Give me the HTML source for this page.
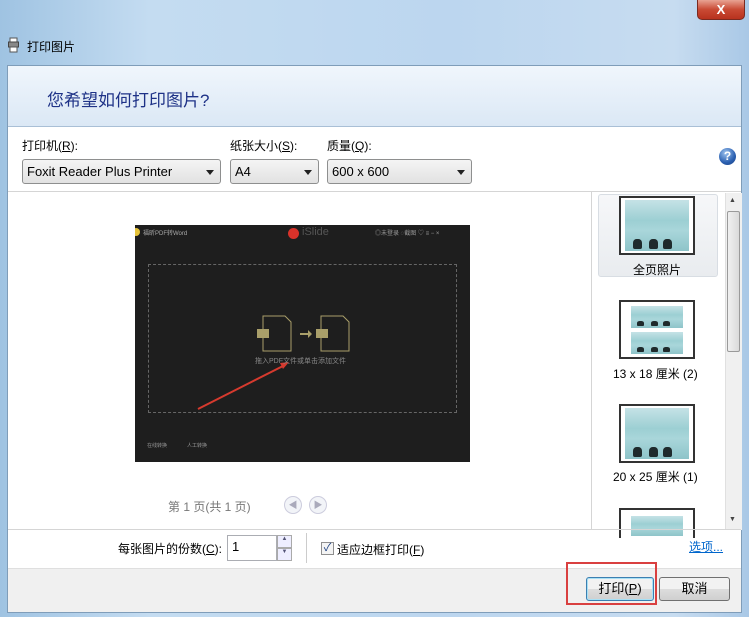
<!DOCTYPE html>
<html><head><meta charset="utf-8"><style>
*{box-sizing:border-box;margin:0;padding:0}
body{width:749px;height:617px;overflow:hidden;position:relative;font-family:"Liberation Sans","Noto Sans CJK SC",sans-serif;font-size:12px;color:#000;background:linear-gradient(90deg,#9fc3e2 0%,#c4dcf1 20%,#bcd6ef 60%,#c7dcf0 90%,#a9c8e6 100%)}
.abs{position:absolute}
.sel{position:absolute;height:25px;border:1px solid #8e8f8f;border-radius:3px;background:linear-gradient(#f4f4f4,#e2e2e2);font-size:13px;padding:4px 0 0 4px}
.sel:after{content:"";position:absolute;right:6px;top:10px;border:4px solid transparent;border-top:5px solid #222}
.btn{position:absolute;height:24px;border:1px solid #707070;border-radius:3px;background:linear-gradient(#f2f2f2 50%,#dddddd 50%,#cfcfcf);text-align:center;font-size:13px;line-height:22px}
.thumb{position:absolute;border:2px solid #333;background:#fff}
.ph{position:absolute;background:linear-gradient(#c5e2e6,#9ccfd3 40%,#a9d6da 60%,#8ec4c9);overflow:hidden}
.fig{position:absolute;bottom:2px;width:9px;height:10px;border-radius:40% 40% 20% 20%;background:#1f2a2c}
</style></head><body>
<div class="abs" style="left:697px;top:0;width:48px;height:20px;border:1px solid #7a2a20;border-top:0;border-radius:0 0 5px 5px;background:linear-gradient(#e8a393,#c94a34 50%,#b8321e);color:#fff;font-weight:bold;text-align:center;font-size:13px;line-height:19px">X</div>
<svg class="abs" style="left:8px;top:37px" width="12" height="16"><rect x="2" y="1" width="7" height="4" fill="#fff" stroke="#555"/><rect x="0.5" y="5" width="10" height="5" fill="#888" stroke="#444"/><rect x="2" y="10" width="7" height="5" fill="#fff" stroke="#555"/></svg>
<div class="abs" style="left:27px;top:38px;font-size:12px">打印图片</div>
<div class="abs" style="left:7px;top:65px;width:735px;height:548px;border:1px solid #7f9db9;background:#fff"></div>
<div class="abs" style="left:8px;top:66px;width:733px;height:61px;background:linear-gradient(#f0f6fc,#dbe8f5);border-bottom:1px solid #a9bfd6"></div>
<div class="abs" style="left:47px;top:86px;font-size:17px;color:#1e3287">您希望如何打印图片?</div>
<div class="abs" style="left:22px;top:137px">打印机(<u>R</u>):</div>
<div class="abs" style="left:230px;top:137px">纸张大小(<u>S</u>):</div>
<div class="abs" style="left:327px;top:137px">质量(<u>Q</u>):</div>
<div class="sel" style="left:22px;top:159px;width:199px">Foxit Reader Plus Printer</div>
<div class="sel" style="left:230px;top:159px;width:89px">A4</div>
<div class="sel" style="left:327px;top:159px;width:145px">600 x 600</div>
<div class="abs" style="left:719px;top:148px;width:17px;height:17px;border-radius:50%;background:radial-gradient(circle at 40% 30%,#9ec4f0,#2a5fb0 60%,#1b3f80);color:#fff;font-weight:bold;font-size:12px;text-align:center;line-height:17px">?</div>
<div class="abs" style="left:8px;top:191px;width:733px;height:1px;background:#d5d5d5"></div>
<div class="abs" style="left:591px;top:192px;width:1px;height:338px;background:#d5d5d5"></div>
<!-- preview -->
<div class="abs" style="left:135px;top:225px;width:335px;height:237px;background:#1e1e1e;overflow:hidden">
<div class="abs" style="left:-3px;top:3px;width:8px;height:8px;border-radius:50%;background:#e6c33a"></div>
<div class="abs" style="left:8px;top:3px;font-size:6px;color:#aaa">福昕PDF转Word</div>
<div class="abs" style="left:153px;top:3px;width:11px;height:11px;border-radius:50%;background:#d8322a"></div>
<div class="abs" style="left:167px;top:1px;font-size:11px;color:#555">iSlide</div>
<div class="abs" style="left:240px;top:3px;font-size:6px;color:#999">◎未登录 ◌截图 ♡ ≡ − ×</div>
<div class="abs" style="left:13px;top:39px;width:309px;height:149px;border:1px dashed #666"></div>
<svg class="abs" style="left:0;top:0" width="335" height="237"><g fill="none" stroke="#a99f6a" stroke-width="1"><path d="M128 91h22l6 6v29h-28z"/><path d="M186 91h22l6 6v29h-28z"/></g><rect x="122" y="104" width="12" height="9" fill="#a99f6a"/><rect x="181" y="104" width="12" height="9" fill="#a99f6a"/><path d="M165 108h8v-3l4 4-4 4v-3h-8z" fill="#a99f6a"/><path d="M63 184L150 140" stroke="#d63a2e" stroke-width="2"/><path d="M154 137l-9 1 3 6z" fill="#d63a2e"/></svg>
<div class="abs" style="left:120px;top:131px;font-size:7px;color:#888">拖入PDF文件或单击添加文件</div>
<div class="abs" style="left:12px;top:217px;font-size:5px;color:#999">在线转换</div>
<div class="abs" style="left:52px;top:217px;font-size:5px;color:#999">人工转换</div>
</div>
<div class="abs" style="left:168px;top:498px;font-size:12px;color:#777">第 1 页(共 1 页)</div>
<div class="abs" style="left:284px;top:496px;width:18px;height:18px;border-radius:50%;border:1px solid #ccd;background:#f2f4f8;color:#aab;font-size:9px;text-align:center;line-height:16px">◀</div>
<div class="abs" style="left:309px;top:496px;width:18px;height:18px;border-radius:50%;border:1px solid #ccd;background:#f2f4f8;color:#aab;font-size:9px;text-align:center;line-height:16px">▶</div>
<!-- right panel -->
<div class="abs" style="left:598px;top:194px;width:120px;height:83px;border:1px solid #d8dde3;border-radius:3px;background:linear-gradient(#f6f7f9,#e9ecef)"></div>
<div class="thumb" style="left:619px;top:196px;width:76px;height:59px"><div class="ph" style="left:4px;top:2px;width:64px;height:51px"><div class="fig" style="left:8px"></div><div class="fig" style="left:24px"></div><div class="fig" style="left:38px"></div></div></div>
<div class="abs" style="left:633px;top:261px;font-size:12px">全页照片</div>
<div class="thumb" style="left:619px;top:300px;width:76px;height:59px"><div class="ph" style="left:10px;top:4px;width:52px;height:22px"><div class="fig" style="left:6px;height:5px;width:7px"></div><div class="fig" style="left:20px;height:5px;width:7px"></div><div class="fig" style="left:32px;height:5px;width:7px"></div></div><div class="ph" style="left:10px;top:30px;width:52px;height:22px"><div class="fig" style="left:6px;height:5px;width:7px"></div><div class="fig" style="left:20px;height:5px;width:7px"></div><div class="fig" style="left:32px;height:5px;width:7px"></div></div></div>
<div class="abs" style="left:613px;top:365px;font-size:12px">13 x 18 厘米 (2)</div>
<div class="thumb" style="left:619px;top:404px;width:76px;height:59px"><div class="ph" style="left:4px;top:2px;width:64px;height:51px"><div class="fig" style="left:8px"></div><div class="fig" style="left:24px"></div><div class="fig" style="left:38px"></div></div></div>
<div class="abs" style="left:613px;top:468px;font-size:12px">20 x 25 厘米 (1)</div>
<div class="thumb" style="left:619px;top:508px;width:76px;height:30px;border-bottom:0"><div class="ph" style="left:10px;top:6px;width:52px;height:20px"></div></div>
<div class="abs" style="left:725px;top:193px;width:17px;height:337px;background:#f0f0f0;border-left:1px solid #e0e0e0"></div>
<div class="abs" style="left:727px;top:211px;width:13px;height:141px;border:1px solid #9a9a9a;border-radius:2px;background:linear-gradient(90deg,#f0f0f0,#dadada)"></div>
<div class="abs" style="left:729px;top:197px;font-size:7px;color:#444">▲</div>
<div class="abs" style="left:729px;top:516px;font-size:7px;color:#444">▼</div>
<div class="abs" style="left:8px;top:529px;width:733px;height:1px;background:#d5d5d5"></div>
<!-- bottom -->
<div class="abs" style="left:118px;top:540px;font-size:12px">每张图片的份数(<u>C</u>):</div>
<div class="abs" style="left:227px;top:535px;width:50px;height:26px;border:1px solid #abadb3;padding:3px 4px;font-size:13px">1</div>
<div class="abs" style="left:277px;top:535px;width:15px;height:13px;border:1px solid #aaa;background:#eef;font-size:6px;text-align:center;color:#557">▲</div>
<div class="abs" style="left:277px;top:548px;width:15px;height:13px;border:1px solid #aaa;background:#eef;font-size:6px;text-align:center;color:#557">▼</div>
<div class="abs" style="left:306px;top:533px;width:1px;height:30px;background:#ccc"></div>
<div class="abs" style="left:321px;top:542px;width:13px;height:13px;border:1px solid #8f8f8f;background:#f4f4f4;font-size:11px;line-height:11px;text-align:center;color:#1b3f80">✓</div>
<div class="abs" style="left:337px;top:541px;font-size:12px">适应边框打印(<u>F</u>)</div>
<div class="abs" style="left:689px;top:538px;font-size:12px;color:#0066cc;text-decoration:underline">选项...</div>
<div class="abs" style="left:8px;top:568px;width:733px;height:44px;background:#f0f0f0;border-top:1px solid #dfdfdf"></div>
<div class="btn" style="left:586px;top:577px;width:68px;border-color:#3c7fb1;box-shadow:inset 0 0 0 1px #a8e0f5">打印(<u>P</u>)</div>
<div class="btn" style="left:659px;top:577px;width:71px">取消</div>
<div class="abs" style="left:566px;top:562px;width:91px;height:43px;border:2px solid #d94040"></div>
</body></html>
